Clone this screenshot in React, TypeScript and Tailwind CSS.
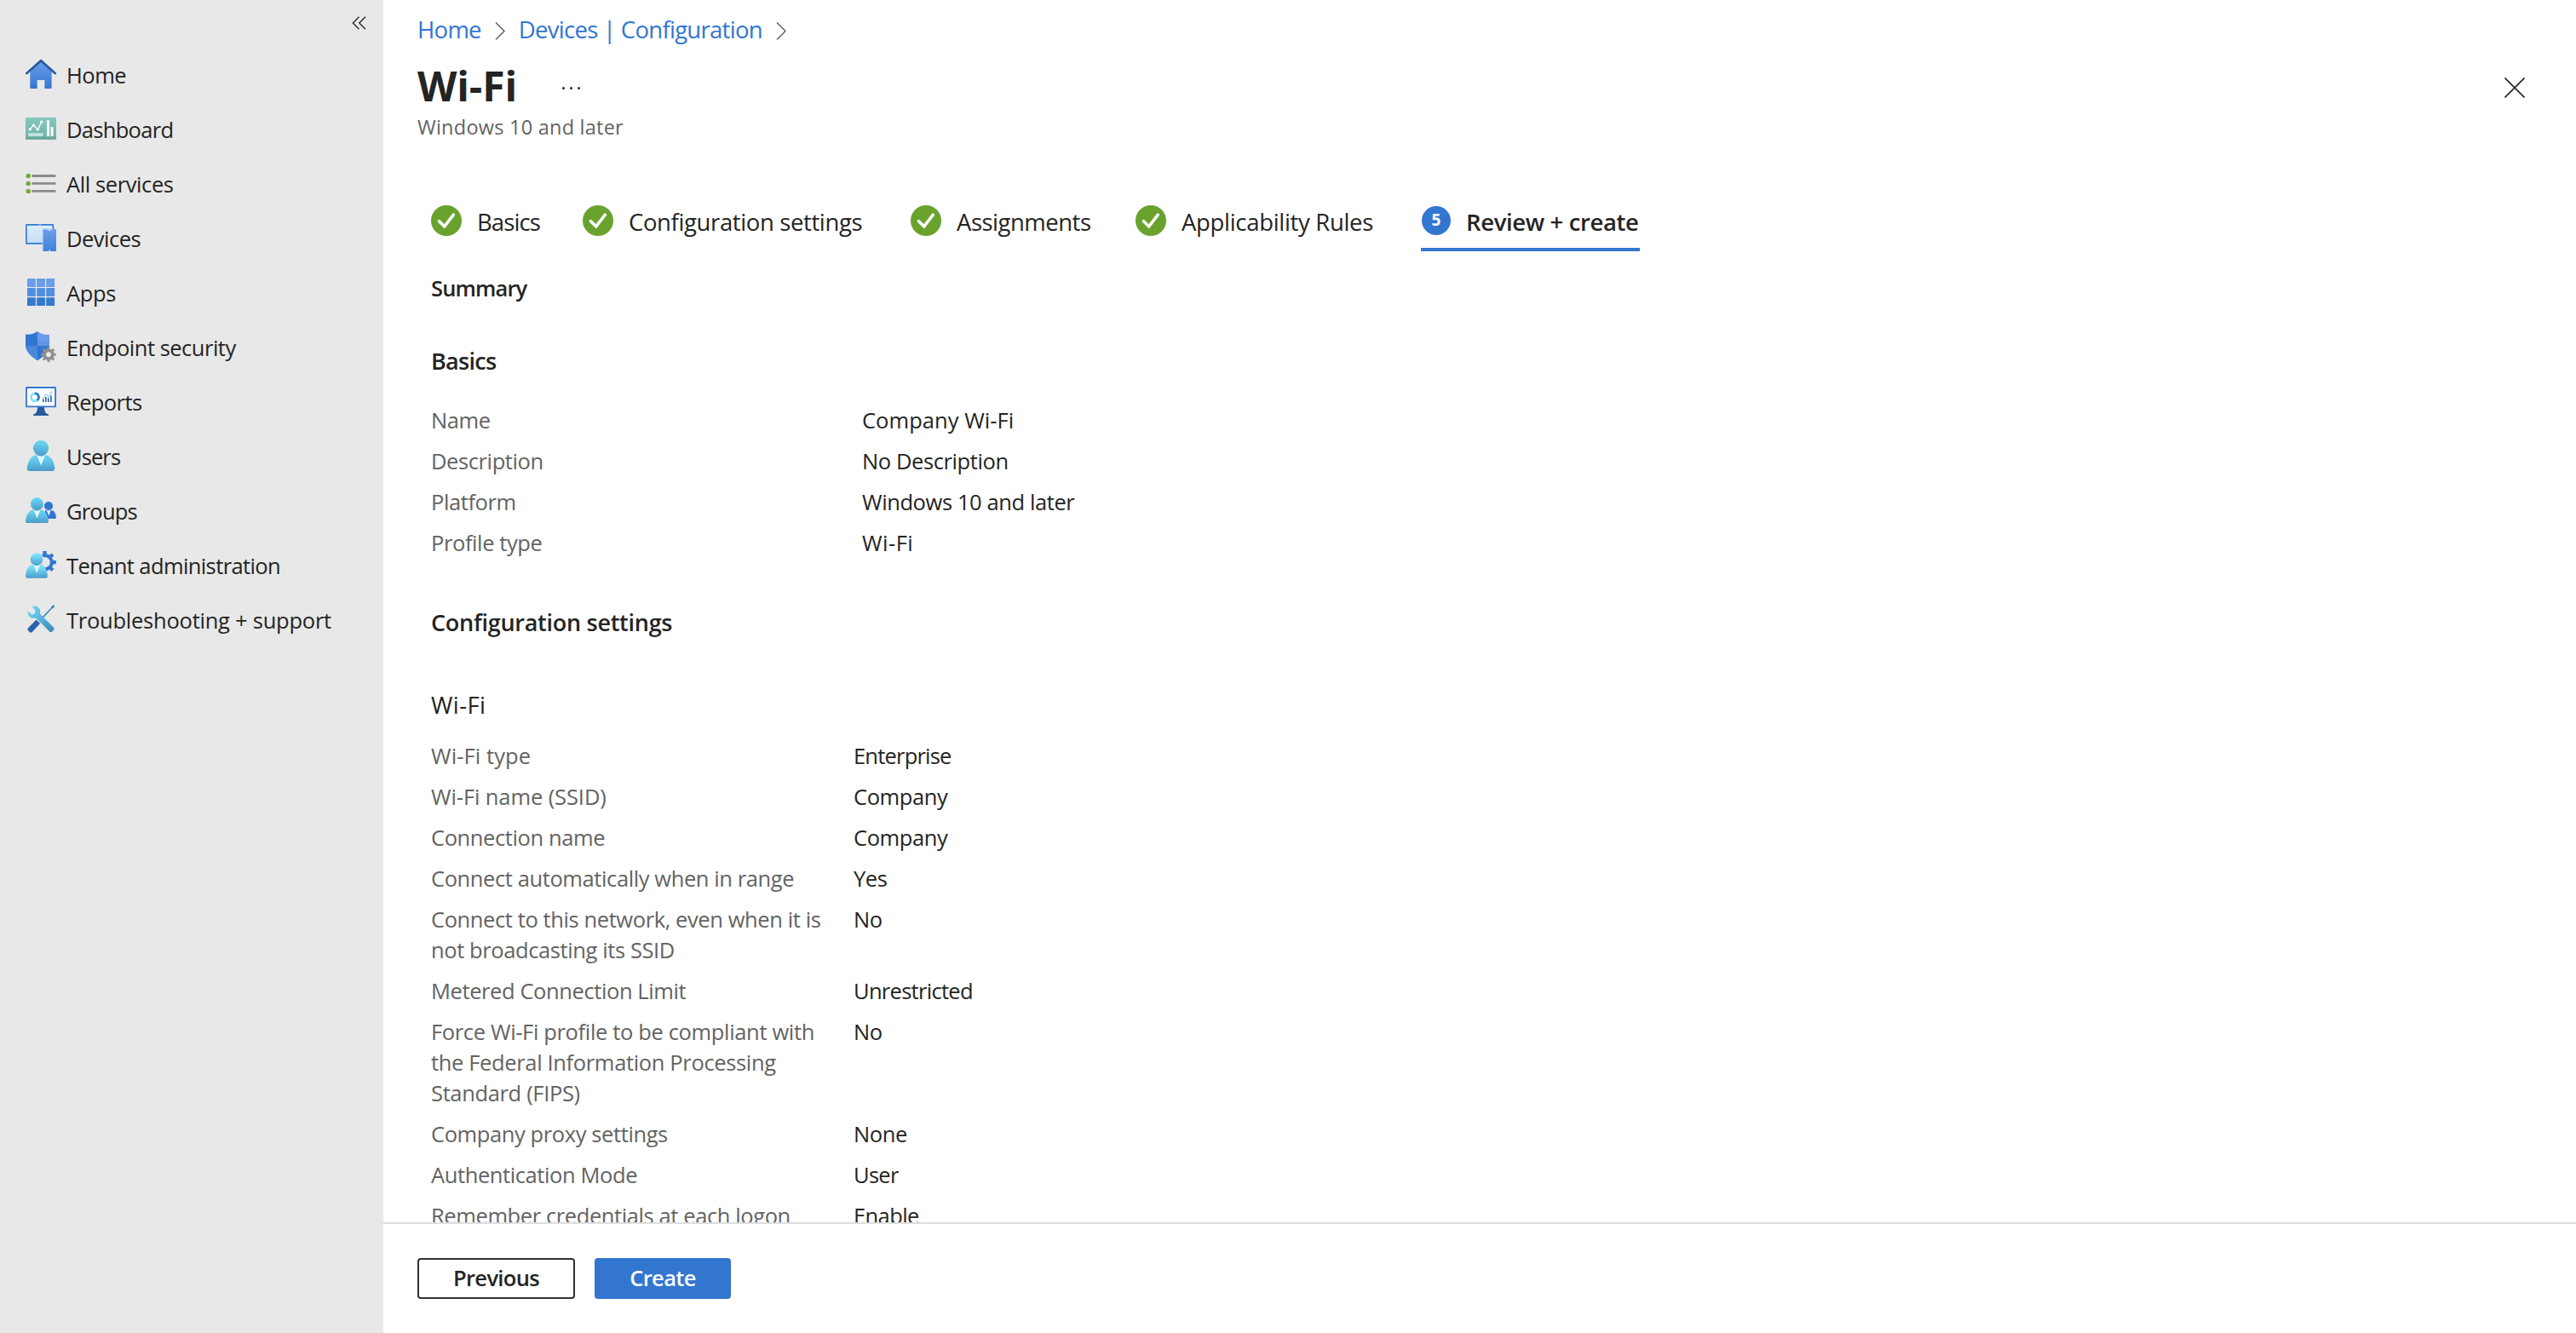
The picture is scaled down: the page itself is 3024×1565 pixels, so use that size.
import type { ReactNode } from "react";

const svgProps = {
  viewBox: "0 0 36 36",
  className: "w-9 h-9 shrink-0 -mt-0.5",
};

function Gear({ cx, cy, r, width, tooth, fill }: {
  cx: number;
  cy: number;
  r: number;
  width: number;
  tooth: number;
  fill: string;
}) {
  return (
    <g transform={`translate(${cx} ${cy})`}>
      <circle r={r} fill="none" stroke={fill} strokeWidth={width} />
      {[0, 45, 90, 135, 180, 225, 270, 315].map((a) => (
        <rect
          key={a}
          x={-tooth / 2}
          y={-(r + width / 2 + tooth * 0.72)}
          width={tooth}
          height={tooth}
          rx={0.4}
          fill={fill}
          transform={`rotate(${a})`}
        />
      ))}
    </g>
  );
}

function HomeIcon() {
  return (
    <svg {...svgProps}>
      <defs>
        <linearGradient id="home" x1="0" y1="0" x2="0" y2="1">
          <stop offset="0" stopColor="#6b9dea" />
          <stop offset="1" stopColor="#3377d2" />
        </linearGradient>
      </defs>
      <path d="M18 2.5 30.6 15v19.2a.8.8 0 0 1-.8.8h-7.4V25h-8.7v10H6.1a.8.8 0 0 1-.8-.8V15Z" fill="url(#home)" />
      <path d="M17.3 1a1.1 1.1 0 0 1 1.5 0L36 16.6v1.6h-2L18 4 2 18.2H0v-1.6Z" fill="#255a9e" />
    </svg>
  );
}

function DashboardIcon() {
  return (
    <svg {...svgProps}>
      <defs>
        <linearGradient id="dash" x1="0" y1="0" x2="0" y2="1">
          <stop offset="0" stopColor="#84c8be" />
          <stop offset="0.85" stopColor="#74b5a8" />
          <stop offset="1" stopColor="#5b9e90" />
        </linearGradient>
      </defs>
      <rect y="5" width="36" height="25.7" rx="0.8" fill="url(#dash)" />
      <path d="m5.3 18.700 4-5 5 5.6 4.4-9" fill="none" stroke="#fff" strokeWidth="1.3" />
      <circle cx="5.3" cy="18.7" r="1.7" fill="#fff" />
      <circle cx="9.3" cy="13.9" r="1.5" fill="#fff" />
      <circle cx="14.3" cy="19" r="1.5" fill="#fff" />
      <circle cx="18.7" cy="10.3" r="1.7" fill="#fff" />
      <rect x="3.3" y="23.2" width="17.4" height="3.8" fill="#c3e3dd" />
      <rect x="25" y="8.3" width="3" height="18.7" fill="#fff" />
      <rect x="29.6" y="16" width="2.9" height="11" fill="#fff" />
    </svg>
  );
}

function ServicesIcon() {
  return (
    <svg {...svgProps}>
      {[9.5, 18.4, 27.4].map((y) => (
        <g key={y}>
          <circle cx="3.2" cy={y} r="2.7" fill="#76a83a" />
          <rect x="7.3" y={y - 1.4} width="28.3" height="2.8" rx="0.8" fill="#8b8b8b" />
        </g>
      ))}
    </svg>
  );
}

function DevicesIcon() {
  return (
    <svg {...svgProps}>
      <defs>
        <linearGradient id="screen" x1="0" y1="0" x2="0" y2="1">
          <stop offset="0" stopColor="#dcf0f9" />
          <stop offset="1" stopColor="#c3dcf7" />
        </linearGradient>
        <linearGradient id="phone" x1="0" y1="0" x2="0" y2="1">
          <stop offset="0" stopColor="#6f9fe9" />
          <stop offset="1" stopColor="#3d80d9" />
        </linearGradient>
      </defs>
      <rect x="0.8" y="2.9" width="31.6" height="22" rx="0.5" fill="url(#screen)" stroke="#3477d2" strokeWidth="1.7" />
      <path d="M15 2.500h4v1h-4z" fill="#9cc0ee" />
      <rect x="20.3" y="8" width="15.7" height="26" rx="0.8" fill="url(#phone)" />
      <path d="M20.3 34V8.6q0-.6.6-.6H32" fill="none" stroke="#a6c5f1" strokeWidth="0.9" />
      <path d="M25.8 8.4h4.5v1.2h-4.5z" fill="#cfe0f8" />
      <circle cx="28.3" cy="32.8" r="0.9" fill="#e6f1fc" />
    </svg>
  );
}

function AppsIcon() {
  const fills = ["#6b9ce8", "#528fdf", "#3679d2"];
  return (
    <svg {...svgProps}>
      {fills.map((fill, row) =>
        [0, 1, 2].map((col) => (
          <rect key={`${row}-${col}`} x={2 + col * 11.1} y={2 + row * 11.1} width="9.9" height="9.9" rx="0.4" fill={fill} />
        ))
      )}
    </svg>
  );
}

function SecurityIcon() {
  return (
    <svg {...svgProps}>
      <defs>
        <clipPath id="shield">
          <path d="M14 0c3.500 3 7.500 3.800 14 3.800V16c0 9-8.500 14.500-14 18.200C8.500 30.500 0 25 0 16V3.800C6.500 3.800 10.500 3 14 0Z" />
        </clipPath>
      </defs>
      <g clipPath="url(#shield)">
        <rect width="28" height="35" fill="#6b9be8" />
        <rect width="14" height="17" fill="#3376d0" />
        <rect x="14" y="11" width="14" height="6" fill="#5f95e4" />
        <rect y="17" width="14" height="18" fill="#4a88dc" />
        <rect x="14" y="17" width="14" height="18" fill="#3376d0" />
      </g>
      <circle cx="27" cy="27.2" r="2.9" fill="#f0f0f0" />
      <Gear cx={27} cy={27.2} r={4.8} width={3.8} tooth={2.9} fill="#919191" />
    </svg>
  );
}

function ReportsIcon() {
  return (
    <svg {...svgProps}>
      <path d="M14 25h8c0 5 1.500 7.500 5 8.500V35H9.200v-1.500C12.500 32.500 14 30 14 25Z" fill="#255a9e" />
      <rect x="0.9" y="2" width="34.2" height="22.4" rx="0.5" fill="#fff" stroke="#3477d2" strokeWidth="1.9" />
      <circle cx="11" cy="13.3" r="4.5" fill="none" stroke="#7fe0fa" strokeWidth="2.7" />
      <path d="M11 8.800a4.500 4.500 0 0 1 2.500 8.200" fill="none" stroke="#3477d2" strokeWidth="2.7" />
      <path d="M20.800 19v-3.500M23.800 19v-6M26.800 19v-4.500M29.900 19v-7.500" stroke="#255a9e" strokeWidth="1.6" />
      <path d="m20.500 14.500 3.500-4.500 3 3 3.500-6" fill="none" stroke="#6fb8e6" strokeWidth="1" />
      <circle cx="20.8" cy="14" r="1.1" fill="#7fe0fa" />
      <circle cx="27" cy="12.8" r="1.1" fill="#7fe0fa" />
      <circle cx="30.3" cy="7.5" r="1.1" fill="#7fe0fa" />
    </svg>
  );
}

function PersonGradient({ id, from = "#66cff0" }: { id: string; from?: string }) {
  return (
    <defs>
      <linearGradient id={id} x1="0" y1="0" x2="0" y2="1">
        <stop offset="0.2" stopColor={from} />
        <stop offset="1" stopColor="#4a9cc6" />
      </linearGradient>
    </defs>
  );
}

function UsersIcon() {
  return (
    <svg {...svgProps}>
      <PersonGradient id="user" />
      <path d="M11 17.500h14c5.500 2 8.500 8 9.300 15.500 0 2-1 3-2.800 3h-27c-1.800 0-2.800-1-2.800-3C2.500 25.500 5.500 19.500 11 17.500Z" fill="url(#user)" />
      <path d="m13.300 17.600 4.900 11.900 4.800-11.900c-3 1.500-6.700 1.500-9.700 0Z" fill="#e6f6fc" />
      <circle cx="18" cy="9.1" r="9.1" fill="url(#user)" />
    </svg>
  );
}

function GroupsIcon() {
  return (
    <svg {...svgProps}>
      <PersonGradient id="group" />
      <path d="M23 18h8c3 1.200 4.700 4.500 5 8.600 0 .9-.5 1.400-1.400 1.400H23Z" fill="#3376d0" />
      <path d="m24.500 18.300 2.800 6.200 2.400-6.200Z" fill="#e6f1fc" />
      <circle cx="27" cy="13" r="5.1" fill="#3376d0" />
      <path d="M7.500 17.700h11.700c4.500 1.700 7.100 6.600 7.700 13 0 1.600-.8 2.300-2.300 2.300H2.300C.8 33 0 32.300 0 30.700c.6-6.400 3-11.300 7.500-13Z" fill="url(#group)" />
      <path d="m9.500 17.800 4 9.700 4-9.700c-2.500 1.200-5.500 1.200-8 0Z" fill="#e6f6fc" />
      <circle cx="13.4" cy="10.7" r="7.5" fill="url(#group)" />
    </svg>
  );
}

function TenantIcon() {
  return (
    <svg {...svgProps}>
      <PersonGradient id="tenant" from="#78ddfa" />
      <Gear cx={22.6} cy={15.2} r={8.2} width={4} tooth={4.2} fill="#3376d0" />
      <path d="M6 22c3-4 6-5 13-4l2 3 1 13.500H5Z" fill="#e8e8e8" />
      <circle cx="13" cy="11.7" r="8.3" fill="#e8e8e8" />
      <path d="M7.200 18h11.400c4.300 1.700 6.800 6.600 7.300 13.200 0 1.700-.8 2.500-2.200 2.500H2.200C.8 33.700 0 32.900 0 31.200.6 24.600 2.900 19.700 7.200 18Z" fill="url(#tenant)" />
      <path d="m9.300 18 3.900 9.700L17 18c-2.400 1.200-5.300 1.200-7.700 0Z" fill="#e6f6fc" />
      <circle cx="13" cy="11.7" r="7.3" fill="url(#tenant)" />
    </svg>
  );
}

function TroubleshootingIcon() {
  return (
    <svg {...svgProps}>
      <defs>
        <linearGradient id="wrench" x1="0" y1="0" x2="1" y2="1">
          <stop offset="0.2" stopColor="#66ccee" />
          <stop offset="1" stopColor="#3a87b4" />
        </linearGradient>
      </defs>
      <path d="M17.500 17.500 29.500 5l2-3.200 2.300-.3-.2 2.500-3 2L19 18.500Z" fill="#3b86b3" />
      <path d="m12.500 18.500 4.600 4.600-9.300 9.800c-1 1-2.100 1-3.100 0l-1.600-1.600c-1-1-1-2.100 0-3.100Z" fill="#2b62ab" />
      <path d="M2.800 8.300 6.600 12c1.400.7 3.600.1 4.300-1.200.8-1.500.6-3.200-.3-4.300L7.700 3.200c3.700-1.900 8.500.1 9.300 3.800.3 1.700.1 3.200-.1 4.600l16 16.100c1 1 1 2.100 0 3.100l-1.700 1.800c-1 1-2.100 1-3.100 0L12 16.400C7 18.200 1.800 14.500 2.800 8.300Z" fill="url(#wrench)" />
    </svg>
  );
}

const navItems: { label: string; icon: ReactNode; tracking: string }[] = [
  { label: "Home", icon: <HomeIcon />, tracking: "tracking-[-0.5px]" },
  { label: "Dashboard", icon: <DashboardIcon />, tracking: "tracking-[-0.7px]" },
  { label: "All services", icon: <ServicesIcon />, tracking: "tracking-[-0.4px]" },
  { label: "Devices", icon: <DevicesIcon />, tracking: "tracking-[-0.5px]" },
  { label: "Apps", icon: <AppsIcon />, tracking: "tracking-[-0.4px]" },
  { label: "Endpoint security", icon: <SecurityIcon />, tracking: "tracking-[-0.5px]" },
  { label: "Reports", icon: <ReportsIcon />, tracking: "tracking-[-0.6px]" },
  { label: "Users", icon: <UsersIcon />, tracking: "tracking-[-0.9px]" },
  { label: "Groups", icon: <GroupsIcon />, tracking: "tracking-[-0.8px]" },
  { label: "Tenant administration", icon: <TenantIcon />, tracking: "tracking-[-0.6px]" },
  { label: "Troubleshooting + support", icon: <TroubleshootingIcon />, tracking: "tracking-[-0.24px]" },
];

const steps = [
  { label: "Basics", width: "w-[178px]", tracking: "tracking-[-0.9px]" },
  { label: "Configuration settings", width: "w-[385px]", tracking: "tracking-[-0.38px]" },
  { label: "Assignments", width: "w-[264px]", tracking: "tracking-[-0.5px]" },
  { label: "Applicability Rules", width: "w-[335px]", tracking: "tracking-[-0.32px]" },
];

type Setting = {
  label: string;
  value: string;
  labelTracking?: string;
  valueTracking?: string;
};

const basics: Setting[] = [
  { label: "Name", value: "Company Wi-Fi", valueTracking: "tracking-[0.05px]" },
  { label: "Description", value: "No Description" },
  { label: "Platform", value: "Windows 10 and later" },
  { label: "Profile type", value: "Wi-Fi", valueTracking: "tracking-[0.5px]" },
];

const wifiSettings: Setting[] = [
  { label: "Wi-Fi type", value: "Enterprise", labelTracking: "tracking-[0.1px]", valueTracking: "tracking-[-0.8px]" },
  { label: "Wi-Fi name (SSID)", value: "Company", labelTracking: "tracking-[-0.1px]" },
  { label: "Connection name", value: "Company" },
  { label: "Connect automatically when in range", value: "Yes" },
  { label: "Connect to this network, even when it is not broadcasting its SSID", value: "No" },
  { label: "Metered Connection Limit", value: "Unrestricted", valueTracking: "tracking-[-0.7px]" },
  {
    label: "Force Wi-Fi profile to be compliant with the Federal Information Processing Standard (FIPS)",
    value: "No",
    labelTracking: "tracking-[-0.35px]",
  },
  { label: "Company proxy settings", value: "None" },
  { label: "Authentication Mode", value: "User", valueTracking: "tracking-[-0.7px]" },
  { label: "Remember credentials at each logon", value: "Enable", valueTracking: "tracking-[-0.6px]" },
];

function SettingRow({ setting, labelWidth }: { setting: Setting; labelWidth: string }) {
  return (
    <div className="flex">
      <dt className={`${labelWidth} shrink-0 pr-6 text-[#636363] ${setting.labelTracking ?? ""}`}>{setting.label}</dt>
      <dd className={`whitespace-nowrap ${setting.valueTracking ?? ""}`}>{setting.value}</dd>
    </div>
  );
}

function Separator() {
  return (
    <svg viewBox="0 0 12 21" className="w-3 h-[21px] mt-0.5" fill="none" stroke="#5c5c5c" strokeWidth="1.4">
      <path d="m1 .5 10 10-10 10" />
    </svg>
  );
}

export default function App() {
  return (
    <div className="flex w-full h-screen overflow-hidden bg-white text-[#242424] text-[25.5px] tracking-[-0.4px] font-['Open_Sans','Segoe_UI',sans-serif]">
      {/* Sidebar */}
      <aside className="w-[450px] shrink-0 bg-[#e8e8e8]">
        <div className="h-14 flex justify-end pr-5 pt-[19px]">
          <svg viewBox="0 0 17 16" className="w-[17px] h-4" fill="none" stroke="#242424" strokeWidth="1.3">
            <path d="M8.500.8 1.300 8l7.200 7.200M16 .8 8.800 8l7.200 7.200" />
          </svg>
        </div>
        <nav>
          {navItems.map((item) => (
            <a key={item.label} href="#" className="h-16 flex items-center gap-3 pl-[30px] whitespace-nowrap">
              {item.icon}
              <span className={item.tracking}>{item.label}</span>
            </a>
          ))}
        </nav>
      </aside>

      <main className="flex-1 min-w-0 flex flex-col">
        {/* Header */}
        <header className="shrink-0 pl-10 pr-[60px]">
          <div className="h-[68px] flex items-center pt-0.5 text-[27.5px] text-[#3175d2] tracking-[-0.72px]">
            <a href="#" className="mr-4">Home</a>
            <Separator />
            <a href="#" className="mx-4">Devices | Configuration</a>
            <Separator />
          </div>
          <div className="h-16 flex items-center">
            <h1 className="w-[170px] pt-0.5 text-5xl font-bold tracking-[-0.1px]">Wi-Fi</h1>
            <div className="flex gap-1.5 pt-1.5">
              <span className="w-[3px] h-[3px] rounded-full bg-[#242424]"></span>
              <span className="w-[3px] h-[3px] rounded-full bg-[#242424]"></span>
              <span className="w-[3px] h-[3px] rounded-full bg-[#242424]"></span>
            </div>
            <svg viewBox="0 0 24 24" className="w-6 h-6 ml-auto mt-1.5" fill="none" stroke="#242424" strokeWidth="1.6">
              <path d="m.5.5 23 23m0-23-23 23" />
            </svg>
          </div>
          <p className="h-[34px] leading-[34px] text-[23.5px] text-[#636363] tracking-[0.24px]">
            Windows 10 and later
          </p>
        </header>

        {/* Wizard */}
        <div className="flex-1 min-h-0 overflow-hidden pl-14 pt-16">
          <div className="h-[65px] flex text-[27.5px] whitespace-nowrap">
            {steps.map((step) => (
              <div key={step.label} className={`${step.width} h-[61px] flex items-center gap-[18px]`}>
                <svg viewBox="0 0 36 36" className="w-9 h-9 -mt-1 shrink-0">
                  <circle cx="18" cy="18" r="18" fill="#6aa22e" />
                  <path d="m9.500 18.700 6.200 6.100L26.300 11.200" fill="none" stroke="#fff" strokeWidth="3.6" strokeLinecap="round" />
                </svg>
                <span className={step.tracking}>{step.label}</span>
              </div>
            ))}
            <div className="w-[257px] h-[65px] border-b-4 border-[#3376d0] flex items-center gap-[18px] pl-px">
              <span className="w-[34px] h-[34px] shrink-0 -mt-1 rounded-full bg-[#3376d0] text-white text-[19px] font-bold tracking-normal flex items-center justify-center">
                5
              </span>
              <span className="font-semibold tracking-[-0.37px]">Review + create</span>
            </div>
          </div>

          <h2 className="mt-[25px] leading-9 font-semibold tracking-[-0.85px]">Summary</h2>

          <h3 className="mt-[50px] leading-9 text-[27px] font-semibold tracking-[-0.7px]">Basics</h3>
          <dl className="mt-[33px] flex flex-col gap-3 leading-9">
            {basics.map((setting) => (
              <SettingRow key={setting.label} setting={setting} labelWidth="w-[506px]" />
            ))}
          </dl>

          <h3 className="mt-[58px] leading-9 text-[27px] font-semibold tracking-[-0.27px]">
            Configuration settings
          </h3>
          <h4 className="mt-[61px] leading-9 text-[27.5px] tracking-[0.4px]">Wi-Fi</h4>
          <dl className="mt-[23px] flex flex-col gap-3 leading-9">
            {wifiSettings.map((setting) => (
              <SettingRow key={setting.label} setting={setting} labelWidth="w-[496px]" />
            ))}
          </dl>
        </div>

        {/* Footer actions */}
        <footer className="h-[130px] shrink-0 border-t-2 border-[#dedede] bg-white pl-10 pt-10 flex gap-[23px] font-semibold tracking-[-0.66px]">
          <button className="w-[185px] h-12 pb-0.5 rounded border-2 border-[#323130] flex items-center justify-center">
            Previous
          </button>
          <button className="w-40 h-12 pb-0.5 rounded bg-[#3376d0] text-white flex items-center justify-center">
            Create
          </button>
        </footer>
      </main>
    </div>
  );
}
